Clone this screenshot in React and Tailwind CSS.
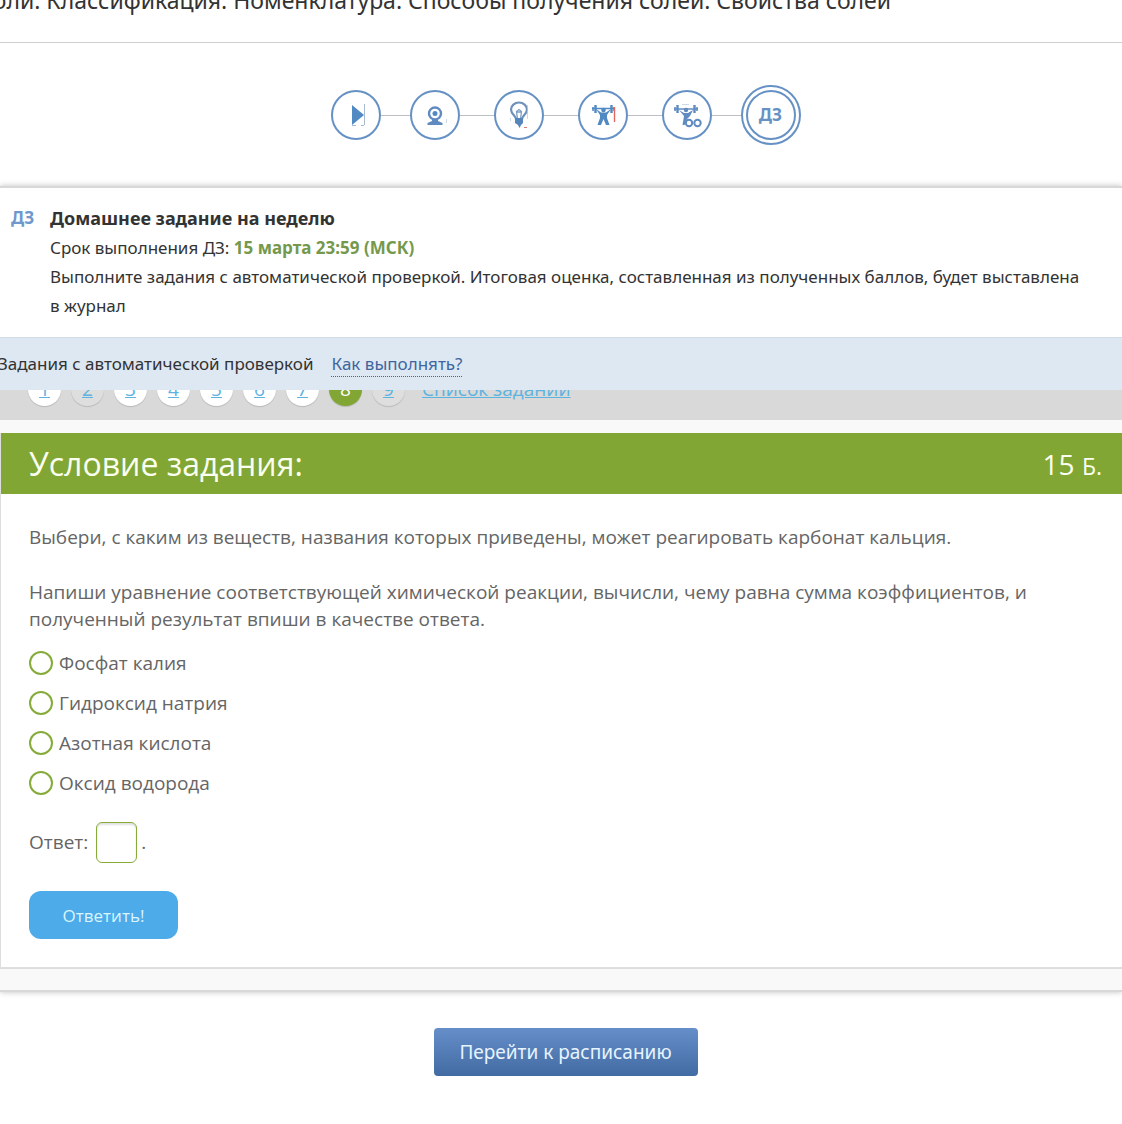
import { useState } from "react";

const steps = [
  { id: "video", label: "Видео", icon: PlayIcon, line: "w-[29px]" },
  { id: "webinar", label: "Вебинар", icon: WebcamIcon, line: "w-[34px]" },
  { id: "theory", label: "Теория", icon: BulbIcon, line: "w-[34px]" },
  { id: "training", label: "Тренировка", icon: LifterIcon, line: "w-[34px]" },
  { id: "extra", label: "Дополнительная тренировка", icon: LifterPlusIcon, line: "w-[29px]" },
];

const tasks = [
  { n: 1 },
  { n: 2, muted: true },
  { n: 3 },
  { n: 4 },
  { n: 5 },
  { n: 6 },
  { n: 7 },
  { n: 8, active: true },
  { n: 9, muted: true },
];

const options = ["Фосфат калия", "Гидроксид натрия", "Азотная кислота", "Оксид водорода"];

function PlayIcon() {
  return (
    <svg width="32" height="32" viewBox="0 0 32 32">
      <path d="M12 6v20l12-10z" fill="#5189c2" />
      <path d="M24.500 5v21M12 26.500h4M21 26.500h3" stroke="#7f9dbd" strokeWidth="0.7" />
    </svg>
  );
}

function WebcamIcon() {
  return (
    <svg width="32" height="32" viewBox="0 0 32 32">
      <circle cx="16" cy="14.500" r="6" fill="none" stroke="#5f8bc0" strokeWidth="2.400" />
      <circle cx="16" cy="14.500" r="2.500" fill="#5189c2" />
      <path d="M13 20.500h6v1.500l4.500 2v2h-15v-2l4.500-2z" fill="#5f8bc0" />
      <path d="M27.500 20v4" stroke="#b9cbe0" strokeWidth="0.7" />
    </svg>
  );
}

function BulbIcon() {
  return (
    <svg width="32" height="32" viewBox="0 0 32 32" fill="none">
      <path
        d="M13 20c0-3-5-5-5-9.500a8 7 0 0 1 16 0c0 4.500-5 6.500-5 9.500z"
        stroke="#6d91ba"
        strokeWidth="2.200"
      />
      <path d="M14.500 20l-1-7.500 2.500-2 2.500 2-1 7.500M14 13h4" stroke="#7f9fc4" strokeWidth="1.300" />
      <path d="M12 19h8v5l-2 2-1.500 3-1.500-3-3-2z" fill="#5585bb" />
      <path d="M24.500 6v14M7.500 19v3" stroke="#b4c8df" strokeWidth="0.7" />
      <path d="M21 28.500h3" stroke="#df7c72" />
    </svg>
  );
}

function LifterIcon() {
  return (
    <svg width="32" height="32" viewBox="0 0 32 32" fill="none" stroke="#5189c2">
      <path d="M5 9.500h22" strokeWidth="1.500" />
      <path d="M8.500 6v8M24.500 6v8" strokeWidth="2.400" />
      <path d="M6 8v4M27 8v4" strokeWidth="1.500" />
      <circle cx="16.500" cy="11" r="2.300" fill="#5189c2" stroke="none" />
      <path
        d="M9 10l5 3.500h5l5-3.500-4 6v3l2.500 7h-3.500l-2.500-6-2.500 6h-3.500l2.500-7v-3z"
        fill="#5189c2"
        stroke="none"
      />
      <path d="M27.500 8v15" stroke="#e2685f" strokeWidth="1.400" />
    </svg>
  );
}

function LifterPlusIcon() {
  return (
    <svg width="32" height="32" viewBox="0 0 32 32" fill="none" stroke="#5f8bc0">
      <path d="M3 10h24" strokeWidth="1.500" />
      <path d="M6.500 6v8M23.500 6v8" strokeWidth="2.400" />
      <path d="M4 8v4M26 8v4" strokeWidth="1.500" />
      <path d="M11 5.500h7" stroke="#b4c8df" strokeWidth="0.700" />
      <circle cx="15" cy="11" r="2.200" fill="#5f8bc0" stroke="none" />
      <path d="M8 11l5 3h4l5-3-3 6-3 3-2.500 6h-2l1.500-9z" fill="#5f8bc0" stroke="none" />
      <circle cx="18" cy="24" r="3.200" strokeWidth="2" />
      <circle cx="26.500" cy="24" r="3.200" strokeWidth="2" />
    </svg>
  );
}

function Steps() {
  return (
    <nav className="flex items-center justify-center pt-[42px] pb-[41px] pl-[9px]">
      {steps.map(({ id, label, icon: Icon, line }) => (
        <div key={id} className="flex items-center">
          <a
            href={`#${id}`}
            aria-label={label}
            className="flex size-[50px] items-center justify-center rounded-full border-2 border-[#6691c4] bg-white"
          >
            <Icon />
          </a>
          <span className={`h-px bg-[#bcbfc4] ${line}`} />
        </div>
      ))}
      <a
        href="#homework"
        className="flex size-[60px] items-center justify-center rounded-full border-2 border-[#6691c4] p-[3px]"
      >
        <span className="flex size-full items-center justify-center rounded-full border-2 border-[#6691c4] text-[17px] font-bold text-[#6691c4]">
          ДЗ
        </span>
      </a>
    </nav>
  );
}

function TaskList() {
  return (
    <div className="flex h-[30px] items-end gap-[10px] overflow-hidden bg-[#d9d9d9] pb-[14px] pl-7 font-['Open_Sans',sans-serif] text-[19px]">
      {tasks.map((t) => (
        <a
          key={t.n}
          href={`#task-${t.n}`}
          className={`flex size-[33px] shrink-0 items-center justify-center rounded-full shadow-[0_1px_1px_rgba(0,0,0,0.15)] ${
            t.active
              ? "bg-[#82a633] text-white"
              : t.muted
                ? "bg-[#dedede] text-[#5cb3e0] underline"
                : "bg-white text-[#5cb3e0] underline"
          }`}
        >
          {t.n}
        </a>
      ))}
      <a href="#tasks" className="ml-[7px] leading-[33px] whitespace-nowrap text-[#5cb3e0] underline">
        Список заданий
      </a>
    </div>
  );
}

function Task() {
  const [choice, setChoice] = useState("");
  const [answer, setAnswer] = useState("");

  return (
    <div className="bg-[#f9f9f9] pt-[13px] pb-[21px] font-['Open_Sans',sans-serif]">
      <div className="border-b-2 border-l border-[#dedede] bg-white">
        <div className="flex h-[61px] items-center justify-between bg-[#82a633] pr-5 pl-7 text-[#fafff0]">
          <h2 className="text-[32px]">Условие задания:</h2>
          <p className="text-[28px]">
            15 <span className="text-[23px]">Б.</span>
          </p>
        </div>

        <form
          className="px-7 pt-[30px] pb-7 text-[19px] leading-[27px] text-[#656565]"
          onSubmit={(e) => e.preventDefault()}
        >
          <p>Выбери, с каким из веществ, названия которых приведены, может реагировать карбонат кальция.</p>
          <p className="mt-7">
            Напиши уравнение соответствующей химической реакции, вычисли, чему равна сумма коэффициентов, и
            полученный результат впиши в качестве ответа.
          </p>

          <div className="mt-[10px]">
            {options.map((o) => (
              <label key={o} className="flex h-10 items-center gap-[6px]">
                <input
                  type="radio"
                  name="substance"
                  checked={choice === o}
                  onChange={() => setChoice(o)}
                  className="size-6 appearance-none rounded-full border-2 border-[#86ab3a] checked:bg-[#86ab3a]"
                />
                {o}
              </label>
            ))}
          </div>

          <div className="mt-[19px] flex items-center">
            <label htmlFor="answer">Ответ:</label>
            <input
              id="answer"
              value={answer}
              onChange={(e) => setAnswer(e.target.value)}
              className="mr-1 ml-2 size-[41px] rounded-md border border-[#86ab3a] text-center shadow-[inset_0_2px_2px_rgba(0,0,0,0.12)]"
            />
            .
          </div>

          <button
            type="submit"
            className="mt-7 block h-12 w-[149px] rounded-xl bg-[#4dabea] text-[17px] text-[#d9f5ff]"
          >
            Ответить!
          </button>
        </form>
      </div>
    </div>
  );
}

export default function App() {
  return (
    <main className="min-h-screen overflow-hidden bg-white font-['Noto_Sans',sans-serif] text-[#333]">
      <header className="h-[43px] overflow-hidden border-b border-[#cfcfcf]">
        <h1 className="-mt-5 -ml-[22px] text-[23px] leading-10 whitespace-nowrap">
          Соли. Классификация. Номенклатура. Способы получения солей. Свойства солей
        </h1>
      </header>

      <Steps />

      <section className="border-y-2 border-[#d8d8d8] shadow-[0_0_6px_rgba(0,0,0,0.25)]">
        <div className="flex py-4 pr-9 pl-[11px] text-[17px] leading-[29px]">
          <span className="w-[39px] shrink-0 leading-[27px] font-bold text-[#6f98cc]">ДЗ</span>
          <div className="pb-[1px]">
            <h2 className="text-[18px] leading-[29px] font-bold">Домашнее задание на неделю</h2>
            <p>
              Срок выполнения ДЗ: <b className="text-[#75994c]">15 марта 23:59 (МСК)</b>
            </p>
            <p>
              Выполните задания с автоматической проверкой. Итоговая оценка, составленная из полученных баллов,
              будет выставлена в журнал
            </p>
          </div>
        </div>

        <div className="flex h-[53px] items-center gap-[18px] border-t border-[#d3dbe4] bg-[#dee8f2] text-[17px] whitespace-nowrap">
          <span className="-ml-[2px]">Задания с автоматической проверкой</span>
          <a href="#help" className="border-b border-dotted border-[#40659e] leading-[25px] text-[#40659e]">
            Как выполнять?
          </a>
        </div>

        <TaskList />
        <Task />
      </section>

      <div className="flex justify-center pt-9 pb-12 pl-[9px]">
        <button
          type="button"
          className="h-12 w-[264px] rounded bg-linear-to-b from-[#668fca] to-[#426ba3] text-[19px] text-[#e6f4ff]"
        >
          Перейти к расписанию
        </button>
      </div>
    </main>
  );
}
